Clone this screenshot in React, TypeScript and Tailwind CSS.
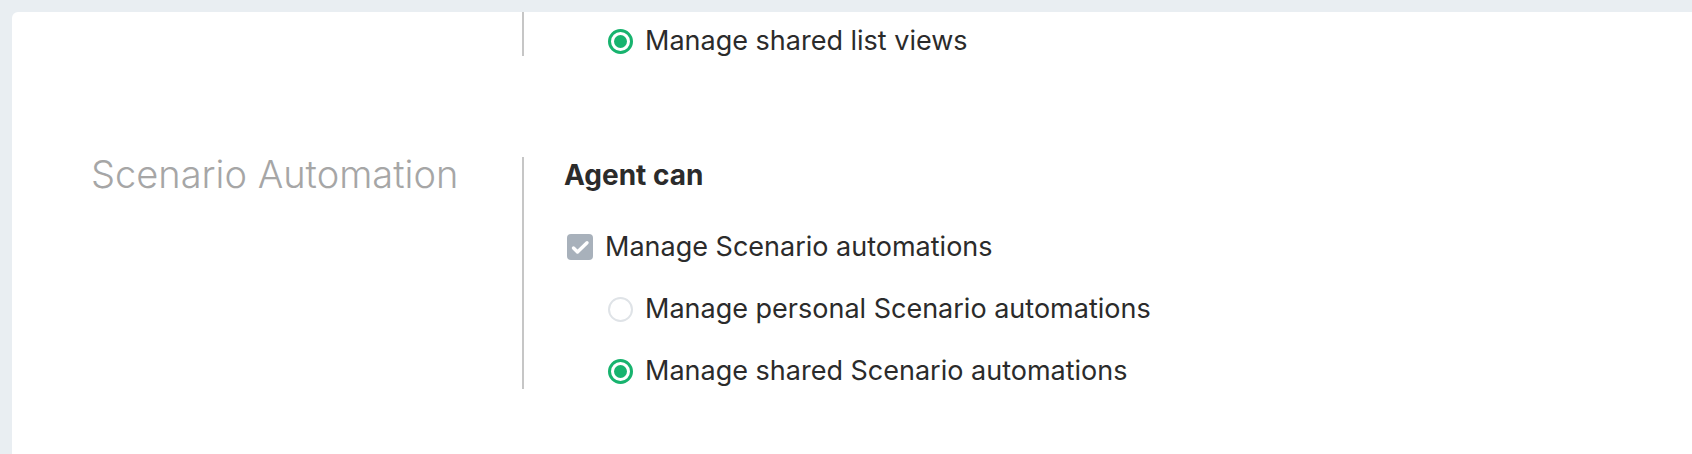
import React from "react";

function RadioOn() {
  return (
    <span className="flex h-[25px] w-[25px] shrink-0 items-center justify-center rounded-full border-[3px] border-[#17b36e] bg-white">
      <span className="h-[13px] w-[13px] rounded-full bg-[#17b36e]" />
    </span>
  );
}

function RadioOff() {
  return <span className="h-[25px] w-[25px] shrink-0 rounded-full border-2 border-[#dfe3e7] bg-white" />;
}

function CheckDisabled() {
  return (
    <span className="flex h-[26px] w-[26px] shrink-0 items-center justify-center rounded-[4px] bg-[#a8b1bb]">
      <svg width="26" height="26" viewBox="0 0 26 26" fill="none">
        <path d="M6.5 14l4 4L20 8.8" stroke="#fff" strokeWidth="3.4" strokeLinecap="round" strokeLinejoin="round" />
      </svg>
    </span>
  );
}

export default function App() {
  return (
    <div
      className="min-h-[454px] bg-[#e9eef2] pl-3 pt-3 text-[#2b2b2b]"
      style={{ fontFamily: "Inter, 'Liberation Sans', sans-serif" }}
    >
      <div className="min-h-[442px] rounded-tl-md bg-white">
        {/* Section 1 (cut off) */}
        <div className="flex">
          <div className="w-[510px] shrink-0" />
          <div className="border-l-2 border-[#c6c6c6] pl-[84px] pt-[14px]">
            <div className="flex h-[30px] items-center gap-3 text-[27px]">
              <RadioOn />
              <span>Manage shared list views</span>
            </div>
          </div>
        </div>

        {/* Section 2 */}
        <div className="mt-[101px] flex">
          <div className="w-[510px] shrink-0 pl-[79px]">
            <div className="text-[38px] font-light leading-[34px] text-[#a6a6a6]">Scenario Automation</div>
          </div>
          <div className="border-l-2 border-[#c6c6c6] pl-10">
            <div className="text-[28px] font-bold leading-[36px]">Agent can</div>
            <div className="mt-9 flex h-9 items-center gap-3 pl-[3px] text-[27px]">
              <CheckDisabled />
              <span>Manage Scenario automations</span>
            </div>
            <div className="mt-[26px] flex h-9 items-center gap-3 pl-11 text-[27px]">
              <RadioOff />
              <span>Manage personal Scenario automations</span>
            </div>
            <div className="mt-[26px] flex h-9 items-center gap-3 pl-11 text-[27px]">
              <RadioOn />
              <span>Manage shared Scenario automations</span>
            </div>
          </div>
        </div>
      </div>
    </div>
  );
}
